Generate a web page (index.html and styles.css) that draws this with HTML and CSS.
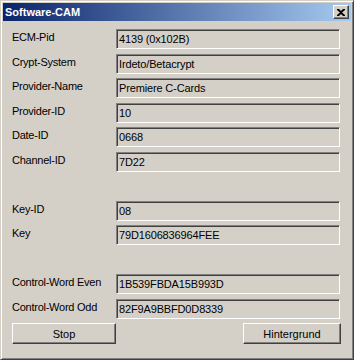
FILE: index.html
```html
<!DOCTYPE html>
<html lang="de">
  <head>
    <meta charset="UTF-8" />
    <title>Software-CAM</title>
    <link rel="stylesheet" href="styles.css">
  </head>
  <body>
    <div class="window">
      <div class="titlebar">
        <span class="title">Software-CAM</span>
        <button class="close" type="button" aria-label="Schließen">
          <svg width="8" height="7" viewBox="0 0 8 7">
            <path d="M0 0h2l2 2 2-2h2v1L5 3.5 8 6v1H6L4 5 2 7H0V6l3-2.5L0 1z" fill="#000" />
          </svg>
        </button>
      </div>

      <div class="dialog">
        <label class="label">ECM-Pid</label>
        <div class="field">4139 (0x102B)</div>

        <label class="label">Crypt-System</label>
        <div class="field">Irdeto/Betacrypt</div>

        <label class="label">Provider-Name</label>
        <div class="field">Premiere C-Cards</div>

        <label class="label">Provider-ID</label>
        <div class="field">10</div>

        <label class="label">Date-ID</label>
        <div class="field">0668</div>

        <label class="label">Channel-ID</label>
        <div class="field">7D22</div>

        <div class="spacer"></div>

        <label class="label">Key-ID</label>
        <div class="field">08</div>

        <label class="label">Key</label>
        <div class="field">79D1606836964FEE</div>

        <div class="spacer"></div>

        <label class="label">Control-Word Even</label>
        <div class="field">1B539FBDA15B993D</div>

        <label class="label">Control-Word Odd</label>
        <div class="field">82F9A9BBFD0D8339</div>

        <button class="btn" type="button">Stop</button>
        <button class="btn btn-right" type="button">Hintergrund</button>
      </div>
    </div>
  </body>
</html>
```

FILE: styles.css
```css
*,
*::before,
*::after {
  box-sizing: border-box;
}

:root {
  --face: #d4d0c8;
  --light: #ffffff;
  --shadow: #808080;
  --dark: #404040;
}

body {
  margin: 0;
  background: var(--face);
  font-family: "Liberation Sans", Arial, sans-serif;
  font-size: 11px;
  color: #000;
}

/* Window frame */
.window {
  width: 354px;
  height: 360px;
  border: 1px solid;
  border-color: var(--face) var(--dark) var(--dark) var(--face);
  box-shadow: inset 1px 1px var(--light), inset -1px -1px var(--shadow);
  padding: 2px;
  background: var(--face);
}

.titlebar {
  height: 18px;
  display: flex;
  align-items: center;
  justify-content: space-between;
  padding: 0 2px;
  background: linear-gradient(to right, #0a246a, #a6caf0);
}

.title {
  color: #fff;
  font-weight: bold;
  font-size: 11px;
}

.close {
  width: 16px;
  height: 14px;
  padding: 0;
  display: flex;
  align-items: center;
  justify-content: center;
  background: var(--face);
  border: 1px solid;
  border-color: var(--light) var(--dark) var(--dark) var(--light);
  box-shadow: inset -1px -1px var(--shadow);
}

/* Dialog body */
.dialog {
  display: grid;
  grid-template-columns: 104px 224px;
  grid-auto-rows: 20px;
  row-gap: 4.5px;
  padding: 8px 0 0 9px;
}

.label {
  align-self: start;
  line-height: 14px;
  padding-top: 1px;
  letter-spacing: -0.25px;
  white-space: nowrap;
}

.field {
  display: flex;
  align-items: center;
  padding: 0 2px;
  line-height: 14px;
  letter-spacing: -0.15px;
  border: 1px solid;
  border-color: var(--shadow) var(--light) var(--light) var(--shadow);
  box-shadow: inset 1px 1px var(--dark), inset -1px -1px var(--face);
  background: var(--face);
  white-space: nowrap;
}

.spacer {
  grid-column: 1 / -1;
}

.btn {
  width: 104px;
  height: 21px;
  padding: 0;
  font-family: inherit;
  font-size: 11px;
  color: #000;
  background: var(--face);
  border: 1px solid;
  border-color: var(--light) var(--dark) var(--dark) var(--light);
  box-shadow: inset -1px -1px var(--shadow);
}

.btn-right {
  width: 98px;
  justify-self: end;
  margin-right: -1px;
}
```
